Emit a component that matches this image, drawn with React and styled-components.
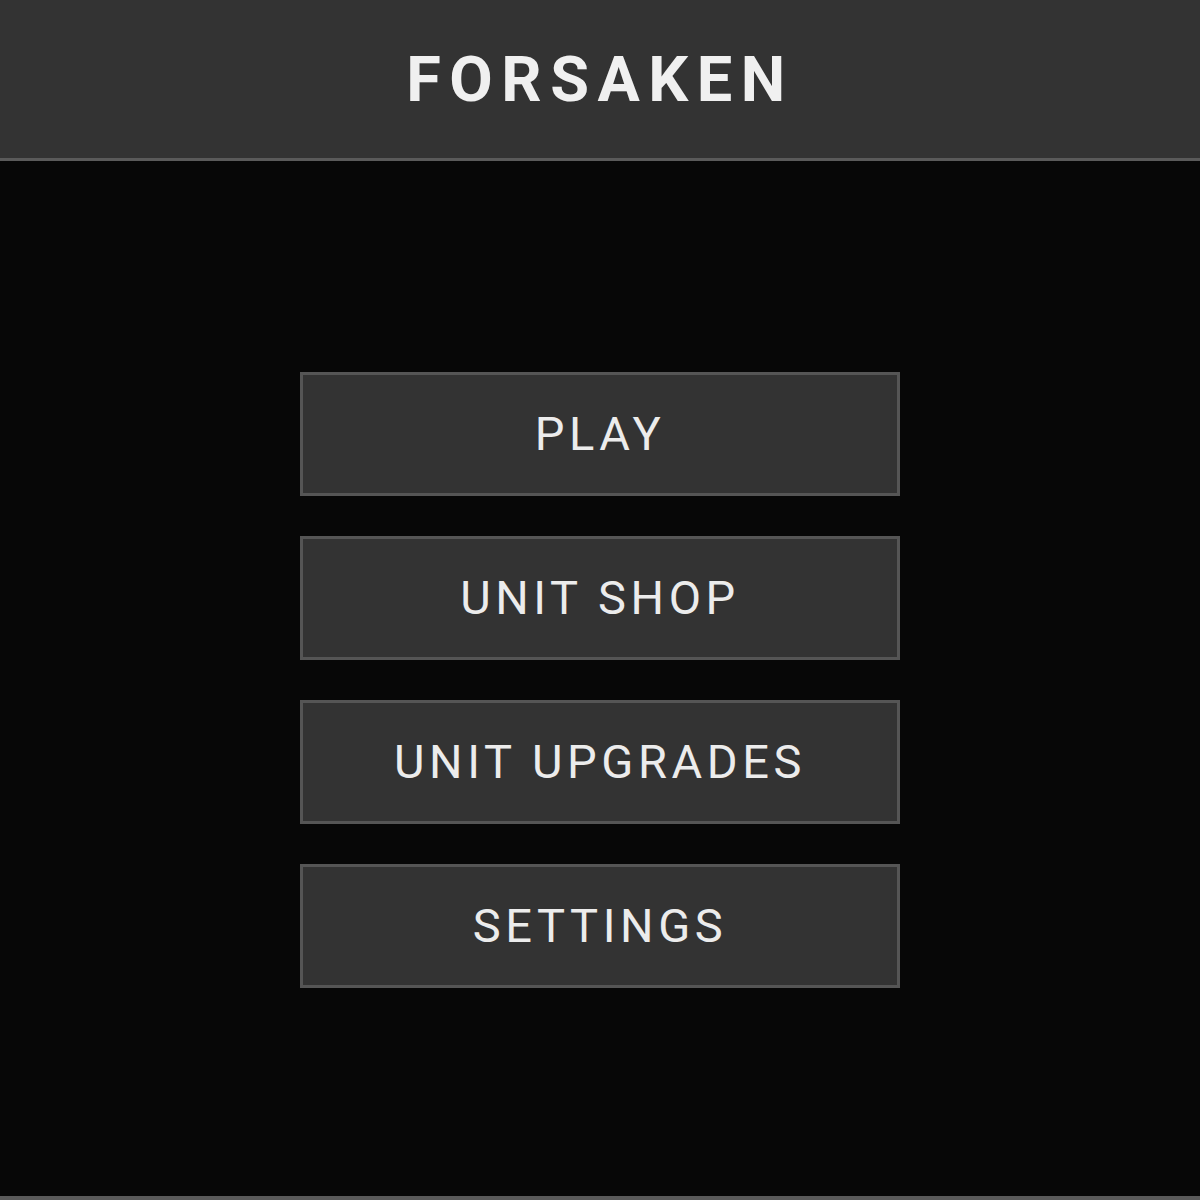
import React from "react";
import styled, { createGlobalStyle } from "styled-components";

const GlobalStyle = createGlobalStyle`
  html, body {
    margin: 0;
    padding: 0;
    background: #070707;
    font-family: Roboto, "Liberation Sans", sans-serif;
  }
`;

const Page = styled.div`
  height: 1200px;
  display: flex;
  flex-direction: column;
`;

const Header = styled.header`
  height: 158px;
  background: #333333;
  border-bottom: 3px solid #5a5a5a;
  display: flex;
  align-items: center;
  justify-content: center;
`;

const Title = styled.h1`
  margin: 0;
  color: #f0f0f0;
  font-size: 63px;
  font-weight: 700;
  letter-spacing: 8.5px;
`;

const Menu = styled.main`
  flex: 1;
  background: #070707;
  border-bottom: 4px solid #5a5a5a;
  display: flex;
  flex-direction: column;
  align-items: center;
  justify-content: center;
  gap: 40px;
  padding-top: 2px;
`;

const MenuButton = styled.button`
  width: 600px;
  height: 124px;
  box-sizing: border-box;
  background: #333333;
  border: 3px solid #555555;
  color: #ececec;
  font-family: Roboto, "Liberation Sans", sans-serif;
  font-size: 47px;
  font-weight: 400;
  letter-spacing: 4.6px;
  padding: 0;
  cursor: pointer;
`;

const items = ["PLAY", "UNIT SHOP", "UNIT UPGRADES", "SETTINGS"];

function App() {
  return (
    <Page>
      <GlobalStyle />
      <Header>
        <Title>FORSAKEN</Title>
      </Header>
      <Menu>
        {items.map((label) => (
          <MenuButton key={label}>{label}</MenuButton>
        ))}
      </Menu>
    </Page>
  );
}

export default App;
